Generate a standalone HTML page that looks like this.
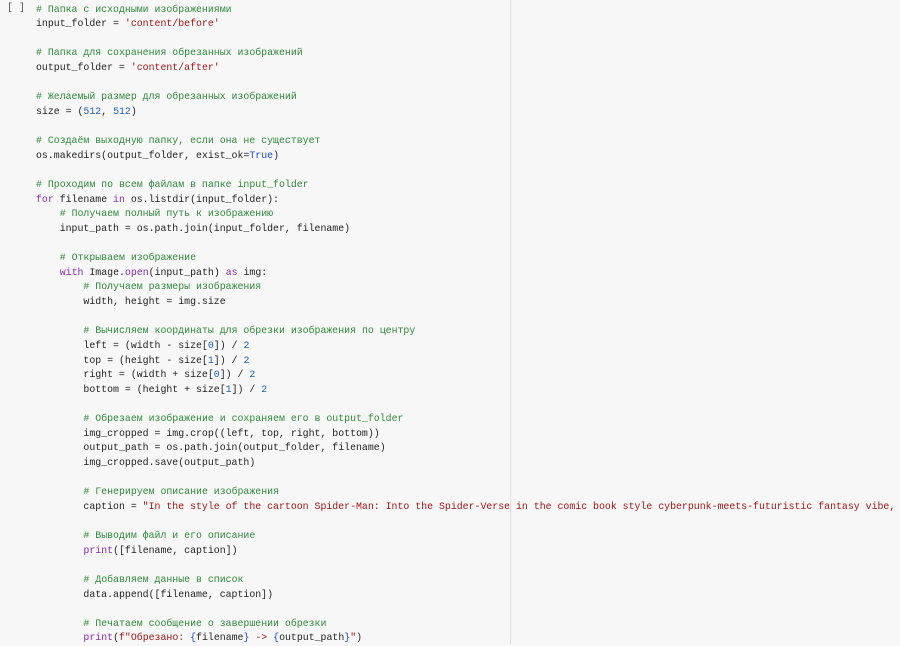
<!DOCTYPE html>
<html><head><meta charset="utf-8"><style>
html,body{margin:0;padding:0;background:#f7f7f7;width:900px;height:644px;overflow:hidden}
.vl{position:absolute;left:510px;top:0;width:1px;height:644px;background:#e0e0e0}
.br{position:absolute;left:7px;top:2px;font:10px "Liberation Mono",monospace;color:#555;line-height:14.63px;white-space:pre}
pre{position:absolute;left:36px;top:2.5px;margin:0;font-family:"Liberation Mono","DejaVu Sans Mono",monospace;font-size:9.88px;line-height:14.63px;color:#1f1f1f;white-space:pre}
.c{color:#2f8a3a}.s{color:#a31515}.n{color:#1a5fb4}.k{color:#8a2bb0}.b{color:#1a4fd6}.p{color:#8a2bb0}
</style></head><body>
<div class="vl"></div>
<div class="br">[ ]</div>
<pre><span class="c"># Папка с исходными изображениями</span>
input_folder = <span class="s">'content/before'</span>

<span class="c"># Папка для сохранения обрезанных изображений</span>
output_folder = <span class="s">'content/after'</span>

<span class="c"># Желаемый размер для обрезанных изображений</span>
size = (<span class="n">512</span>, <span class="n">512</span>)

<span class="c"># Создаём выходную папку, если она не существует</span>
os.makedirs(output_folder, exist_ok=<span class="b">True</span>)

<span class="c"># Проходим по всем файлам в папке input_folder</span>
<span class="k">for</span> filename <span class="k">in</span> os.listdir(input_folder):
    <span class="c"># Получаем полный путь к изображению</span>
    input_path = os.path.join(input_folder, filename)

    <span class="c"># Открываем изображение</span>
    <span class="k">with</span> Image.<span class="p">open</span>(input_path) <span class="k">as</span> img:
        <span class="c"># Получаем размеры изображения</span>
        width, height = img.size

        <span class="c"># Вычисляем координаты для обрезки изображения по центру</span>
        left = (width - size[<span class="n">0</span>]) / <span class="n">2</span>
        top = (height - size[<span class="n">1</span>]) / <span class="n">2</span>
        right = (width + size[<span class="n">0</span>]) / <span class="n">2</span>
        bottom = (height + size[<span class="n">1</span>]) / <span class="n">2</span>

        <span class="c"># Обрезаем изображение и сохраняем его в output_folder</span>
        img_cropped = img.crop((left, top, right, bottom))
        output_path = os.path.join(output_folder, filename)
        img_cropped.save(output_path)

        <span class="c"># Генерируем описание изображения</span>
        caption = <span class="s">"In the style of the cartoon Spider-Man: Into the Spider-Verse in the comic book style cyberpunk-meets-futuristic fantasy vibe,</span>

        <span class="c"># Выводим файл и его описание</span>
        <span class="p">print</span>([filename, caption])

        <span class="c"># Добавляем данные в список</span>
        data.append([filename, caption])

        <span class="c"># Печатаем сообщение о завершении обрезки</span>
        <span class="p">print</span>(<span class="s">f"Обрезано: </span><span class="b">{</span>filename<span class="b">}</span><span class="s"> -&gt; </span><span class="b">{</span>output_path<span class="b">}</span><span class="s">"</span>)
</pre>
</body></html>
